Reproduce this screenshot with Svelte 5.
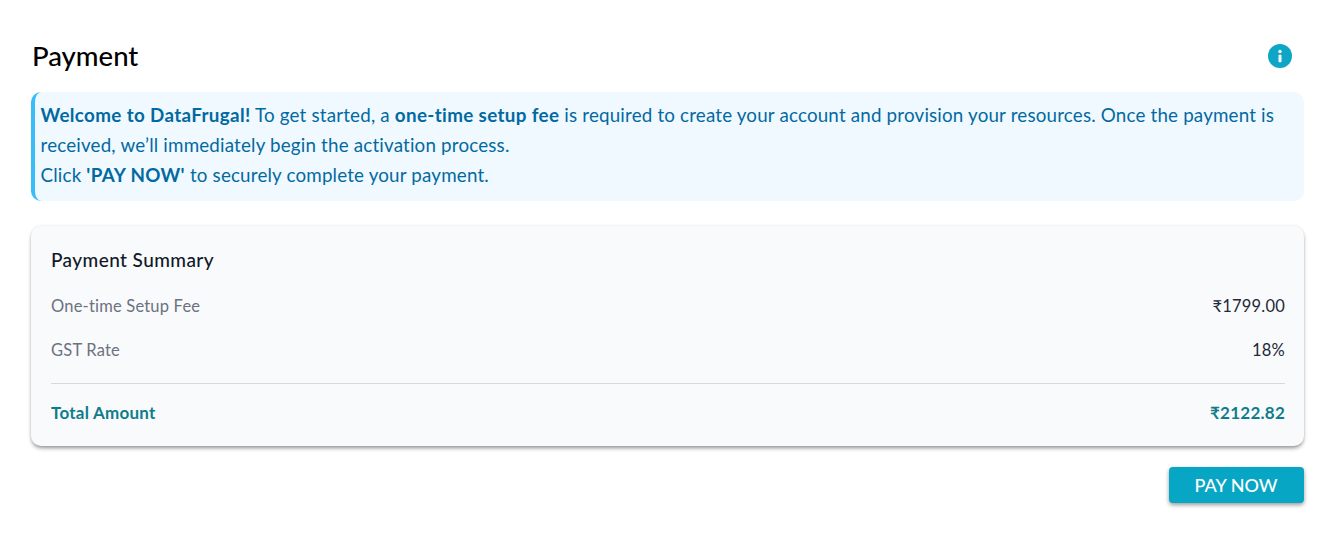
<script>
  const rows = [
    { label: 'One-time Setup Fee', value: '₹1799.00' },
    { label: 'GST Rate', value: '18%' }
  ];
</script>

<main class="page">
  <header class="head">
    <h1>Payment</h1>
    <svg class="info" viewBox="0 0 24 24" aria-label="info">
      <circle cx="12" cy="12" r="12" fill="#0ea5c6" />
      <circle cx="12" cy="7.5" r="1.7" fill="#fff" />
      <rect x="10.5" y="10.8" width="3" height="7.4" rx="0.7" fill="#fff" />
    </svg>
  </header>

  <section class="alert">
    <p><strong>Welcome to DataFrugal!</strong> To get started, a <strong>one-time setup fee</strong> is required to create your account and provision your resources. Once the payment is received, we’ll immediately begin the activation process.</p>
    <p>Click <strong>'PAY NOW'</strong> to securely complete your payment.</p>
  </section>

  <section class="card">
    <h2>Payment Summary</h2>
    {#each rows as row}
      <div class="row">
        <span class="label">{row.label}</span>
        <span class="value">{row.value}</span>
      </div>
    {/each}
    <div class="total">
      <span>Total Amount</span>
      <span>₹2122.82</span>
    </div>
  </section>

  <div class="actions">
    <button type="button">PAY NOW</button>
  </div>
</main>

<style>
  :global(body) {
    margin: 0;
    background: #fff;
  }
  .page {
    box-sizing: border-box;
    width: 1334px;
    height: 533px;
    padding: 36px 30px 0 31px;
    font-family: Lato, "Noto Sans", sans-serif;
    overflow: hidden;
  }
  .head {
    display: flex;
    align-items: center;
    justify-content: space-between;
    height: 40px;
    margin-bottom: 16px;
  }
  h1 {
    margin: 0 0 0 1px;
    font-size: 27.5px;
    font-weight: 500;
    line-height: 40px;
    color: #000;
  }
  .info {
    width: 24px;
    height: 24px;
    margin-right: 12px;
  }
  .alert {
    box-sizing: border-box;
    height: 109px;
    padding: 8px 16px 0 5.5px;
    border-left: 4px solid #38bdf8;
    border-radius: 10px;
    background: #f0f9ff;
    color: #0369a1;
    font-size: 18.8px;
    letter-spacing: 0.175px;
    line-height: 30px;
    margin-bottom: 25px;
  }
  .alert p {
    margin: 0;
  }
  .alert strong {
    font-weight: 700;
    letter-spacing: 0.36px;
  }
  .card {
    box-sizing: border-box;
    height: 220px;
    padding: 20px 19px 0 20px;
    border-radius: 10px;
    background: #f9fafb;
    box-shadow: 0 3px 4px -1px rgba(0, 0, 0, 0.42), 0 0 3px rgba(0, 0, 0, 0.1);
    margin-bottom: 21px;
  }
  h2 {
    margin: 0 0 20px;
    font-size: 19px;
    font-weight: 500;
    letter-spacing: 0.42px;
    line-height: 28px;
    color: #111827;
  }
  .row {
    display: flex;
    justify-content: space-between;
    height: 44px;
    line-height: 24px;
    font-size: 16.5px;
    letter-spacing: 0.2px;
  }
  .label {
    color: #6b7280;
  }
  .value {
    color: #1f2937;
  }
  .total {
    display: flex;
    justify-content: space-between;
    border-top: 1px solid #d9dadd;
    margin-top: 1px;
    padding-top: 17px;
    line-height: 24px;
    font-size: 17px;
    font-weight: 700;
    letter-spacing: 0.25px;
    color: #0f7c8c;
  }
  .actions {
    display: flex;
    justify-content: flex-end;
  }
  button {
    width: 135px;
    height: 36px;
    padding: 0 1px 0 0;
    border: 0;
    border-radius: 4px;
    background: #06a6c4;
    color: #fff;
    font-family: inherit;
    font-size: 18px;
    font-weight: 500;
    box-shadow: 0 2px 4px rgba(0, 0, 0, 0.4);
  }
</style>
